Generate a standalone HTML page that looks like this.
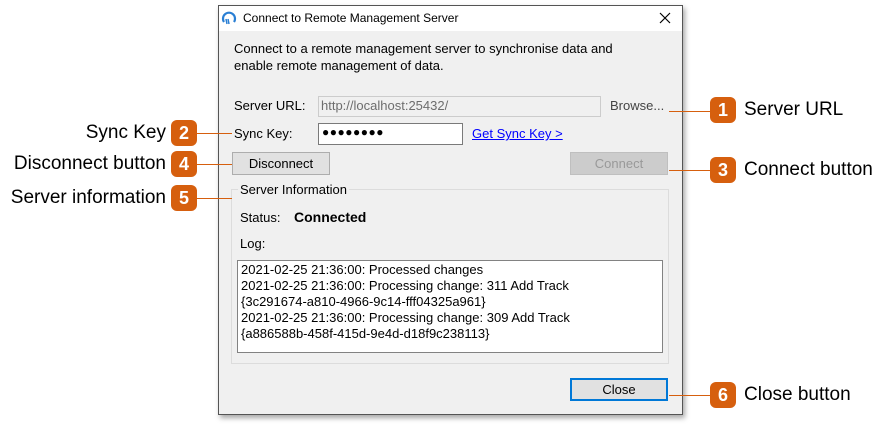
<!DOCTYPE html>
<html><head><style>
*{margin:0;padding:0;box-sizing:border-box}
body{width:888px;height:424px;background:#fff;position:relative;font-family:"Liberation Sans",sans-serif;overflow:hidden}
.a{position:absolute}
.dlg{left:218px;top:5px;width:465px;height:410px;background:#f0f0f0;border:1px solid #555;box-shadow:2px 3px 5px rgba(0,0,0,.35)}
.t{font-size:13px;color:#000;white-space:nowrap}
.badge{width:26px;height:26px;border-radius:6px;background:#d65f0e;color:#fff;font-weight:bold;font-size:18px;text-align:center;line-height:26px}
.lbl{font-size:19px;color:#000;white-space:nowrap}
.ln{height:1px;background:#d65f0e}
.btn{border:1px solid #adadad;background:#e1e1e1;font-size:13px;text-align:center}
</style></head><body>
<div class="a dlg"></div>
<div class="a" style="left:219px;top:6px;width:463px;height:25px;background:#fff"></div>
<svg class="a" style="left:221px;top:10px" width="16" height="16" viewBox="0 0 16 16"><path d="M3 12 A6 6 0 1 1 13 12" stroke="#2a7fd4" stroke-width="2.2" fill="none"/><path d="M5 9 l1 5 M7 9 l1 5" stroke="#2a7fd4" stroke-width="1.5"/></svg>
<div class="a t" style="left:243px;top:11px;font-size:12px">Connect to Remote Management Server</div>
<svg class="a" style="left:659px;top:12px" width="12" height="12"><path d="M1 1L11 11M11 1L1 11" stroke="#000" stroke-width="1.2"/></svg>
<div class="a t" style="left:234px;top:40px;line-height:17px">Connect to a remote management server to synchronise data and<br>enable remote management of data.</div>
<div class="a t" style="left:234px;top:98px">Server URL:</div>
<div class="a" style="left:318px;top:96px;width:283px;height:21px;border:1px solid #ccc;background:#f0f0f0"></div>
<div class="a t" style="left:321px;top:98px;color:#6d6d6d">http://localhost:25432/</div>
<div class="a t" style="left:610px;top:98px;color:#444">Browse...</div>
<div class="a t" style="left:234px;top:126px">Sync Key:</div>
<div class="a" style="left:318px;top:123px;width:145px;height:22px;border:1px solid #7a7a7a;background:#fff"></div>
<div class="a t" style="left:322px;top:125px;font-size:12px;letter-spacing:0.5px">●●●●●●●●</div>
<div class="a t" style="left:472px;top:126px;color:#0000ff;text-decoration:underline">Get Sync Key &gt;</div>
<div class="a btn" style="left:232px;top:152px;width:98px;height:23px;line-height:21px">Disconnect</div>
<div class="a btn" style="left:570px;top:152px;width:98px;height:23px;line-height:21px;color:#999;background:#ccc;border-color:#bfbfbf">Connect</div>
<div class="a" style="left:231px;top:189px;width:438px;height:175px;border:1px solid #dcdcdc"></div>
<div class="a t" style="left:238px;top:182px;background:#f0f0f0;padding:0 2px">Server Information</div>
<div class="a t" style="left:240px;top:210px">Status:</div>
<div class="a t" style="left:294px;top:209px;font-weight:bold;font-size:14px">Connected</div>
<div class="a t" style="left:240px;top:236px">Log:</div>
<div class="a" style="left:237px;top:260px;width:426px;height:93px;border:1px solid #828282;background:#fff"></div>
<div class="a t" style="left:241px;top:262px;line-height:16px">2021-02-25 21:36:00: Processed changes<br>2021-02-25 21:36:00: Processing change: 311 Add Track<br>{3c291674-a810-4966-9c14-fff04325a961}<br>2021-02-25 21:36:00: Processing change: 309 Add Track<br>{a886588b-458f-415d-9e4d-d18f9c238113}</div>
<div class="a btn" style="left:570px;top:378px;width:98px;height:23px;line-height:19px;border:2px solid #0078d7">Close</div>

<div class="a ln" style="left:669px;top:111px;width:42px"></div>
<div class="a badge" style="left:710px;top:97px">1</div>
<div class="a lbl" style="left:744px;top:99px">Server URL</div>
<div class="a ln" style="left:669px;top:170px;width:42px"></div>
<div class="a badge" style="left:710px;top:157px">3</div>
<div class="a lbl" style="left:744px;top:159px">Connect button</div>
<div class="a ln" style="left:669px;top:395px;width:42px"></div>
<div class="a badge" style="left:710px;top:382px">6</div>
<div class="a lbl" style="left:744px;top:384px">Close button</div>

<div class="a ln" style="left:196px;top:133px;width:36px"></div>
<div class="a badge" style="left:171px;top:120px">2</div>
<div class="a lbl" style="right:722px;top:122px">Sync Key</div>
<div class="a ln" style="left:196px;top:164px;width:36px"></div>
<div class="a badge" style="left:171px;top:151px">4</div>
<div class="a lbl" style="right:722px;top:153px">Disconnect button</div>
<div class="a ln" style="left:196px;top:198px;width:36px"></div>
<div class="a badge" style="left:171px;top:185px">5</div>
<div class="a lbl" style="right:722px;top:187px">Server information</div>
</body></html>
